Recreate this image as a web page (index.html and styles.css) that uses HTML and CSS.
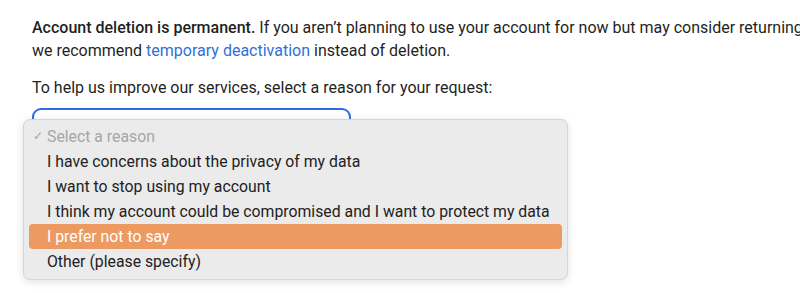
FILE: index.html
```html
<!DOCTYPE html>
<html lang="en">
<head>
    <meta charset="UTF-8">
    <meta name="viewport" content="width=device-width, initial-scale=1.0">
    <title>Delete account</title>
    <link rel="stylesheet" href="styles.css">
</head>
<body>
    <div class="container">
        <p class="notice">
            <b>Account deletion is permanent.</b> If you aren’t planning to use your account for now but may consider returning later,<br>
            we recommend <a href="#">temporary deactivation</a> instead of deletion.
        </p>
        <p class="prompt">To help us improve our services, select a reason for your request:</p>

        <div class="reason">
            <div class="select-box"></div>
            <ul class="menu">
                <li class="placeholder"><span class="check">✓</span>Select a reason</li>
                <li>I have concerns about the privacy of my data</li>
                <li>I want to stop using my account</li>
                <li>I think my account could be compromised and I want to protect my data</li>
                <li class="active">I prefer not to say</li>
                <li>Other (please specify)</li>
            </ul>
        </div>
    </div>
</body>
</html>
```

FILE: styles.css
```css
html, body {
    margin: 0;
    padding: 0;
    overflow: hidden;
    background: #fff;
}

body {
    font-family: Roboto, "Liberation Sans", sans-serif;
    color: #1f1f1f;
    font-size: 16px;
}

.container {
    padding: 16px 0 0 32px;
}

.container p {
    margin: 0;
    line-height: 23px;
    white-space: nowrap;
}

.notice b {
    font-weight: 500;
}

.notice a {
    color: #2f6fd8;
    text-decoration: none;
}

.prompt {
    margin-top: 14px !important;
}

.reason {
    position: relative;
    margin-top: 9px;
    height: 190px;
}

.select-box {
    width: 315px;
    height: 30px;
    border: 2px solid #2e6de0;
    border-radius: 9px;
}

.menu {
    position: absolute;
    top: 11px;
    left: -9px;
    width: 533px;
    margin: 0;
    padding: 4px 5px 5px;
    list-style: none;
    background-color: #ebebeb;
    border: 1px solid #d6d6d6;
    border-radius: 7px;
    box-shadow: 0 2px 8px rgba(0, 0, 0, 0.12);
    font-size: 15.8px;
}

.menu > li {
    position: relative;
    height: 25px;
    line-height: 25px;
    padding-left: 18px;
    border-radius: 4px;
    color: #222;
}

.menu > li.placeholder {
    color: #a6a6a6;
}

.menu .check {
    position: absolute;
    left: 4px;
    font-size: 12px;
}

.menu > li.active {
    background-color: #ec9a62;
    color: #fff;
}
```
